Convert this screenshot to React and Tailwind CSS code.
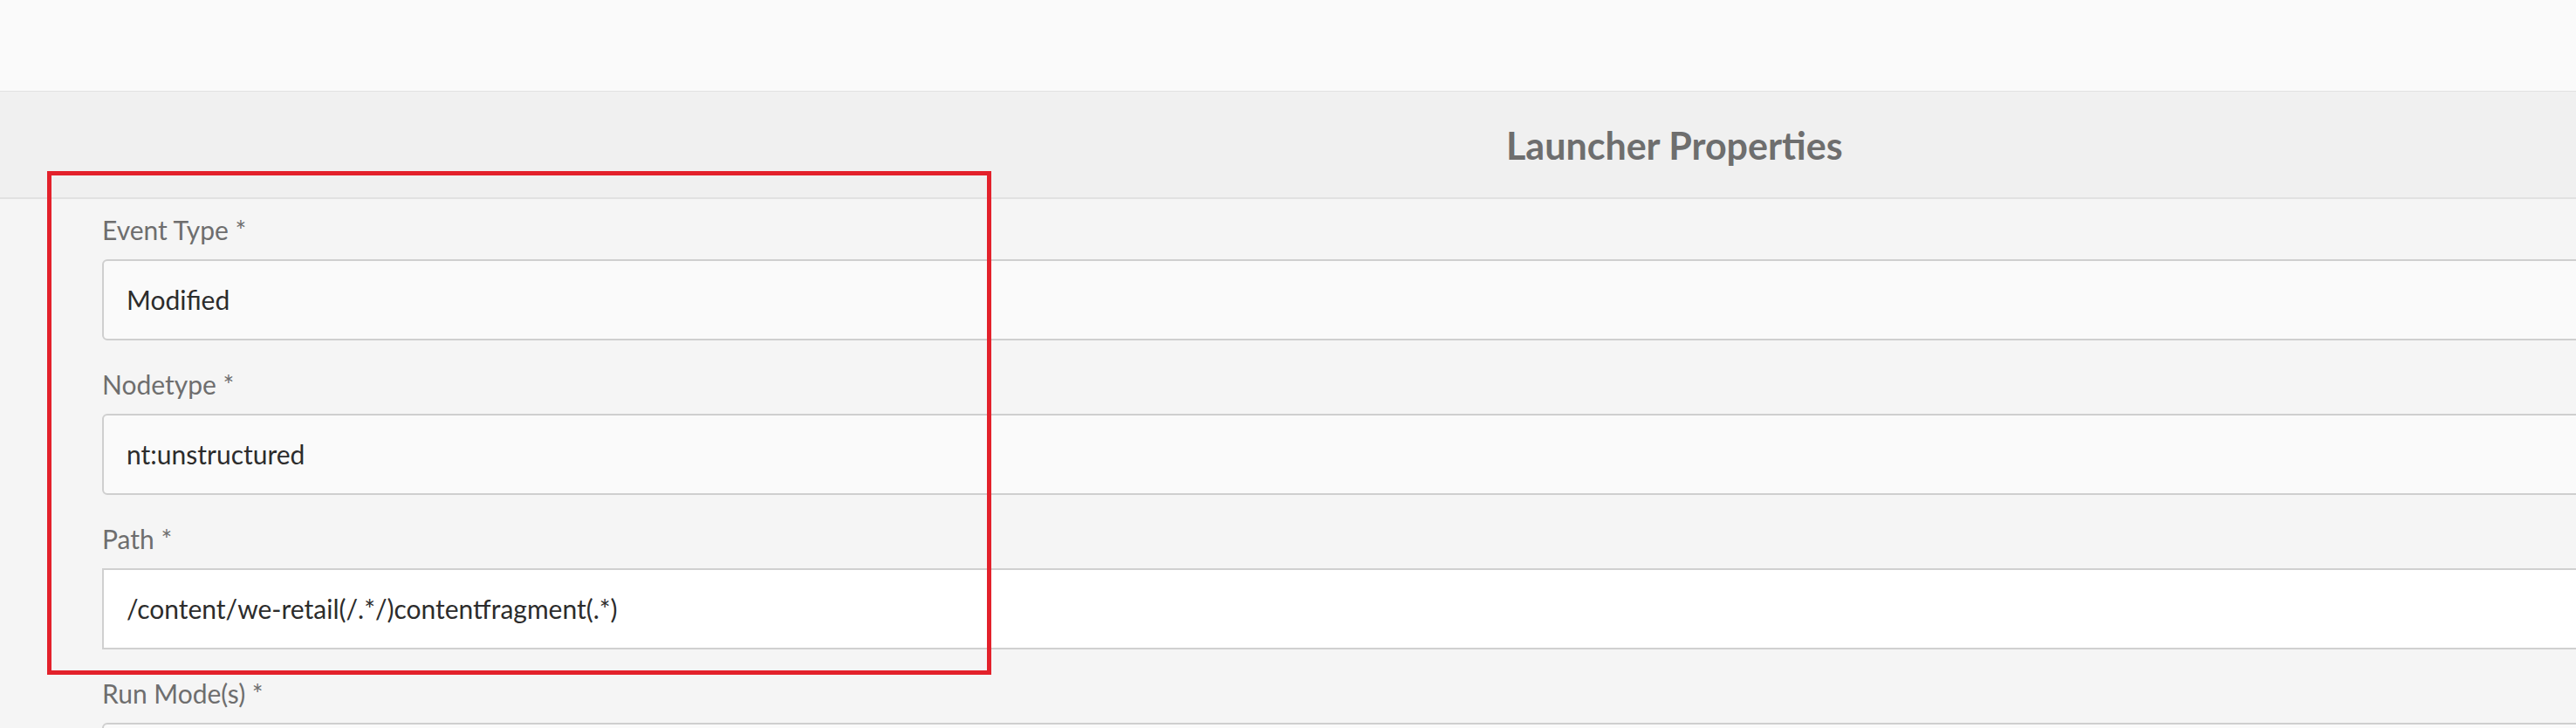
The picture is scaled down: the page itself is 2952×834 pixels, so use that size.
import React from "react";

const fields = [
  { label: "Event Type *", value: "Modified", kind: "select" },
  { label: "Nodetype *", value: "nt:unstructured", kind: "select" },
  { label: "Path *", value: "/content/we-retail(/.*/)contentfragment(.*)", kind: "text" },
  { label: "Run Mode(s) *", value: "", kind: "select" },
];

function Field({ label, value, kind }) {
  return (
    <div className="flex flex-col">
      <label className="text-[30px] leading-[36px] text-[#6e6e6e]">{label}</label>
      <div
        className={`mt-4 h-[93px] w-[2900px] flex items-center pl-[26px] border-2 text-[30px] text-[#2c2c2c] ${
          kind === "text"
            ? "bg-white border-[#d0d0d0]"
            : "bg-[#fafafa] border-[#cfcfcf] rounded-[6px]"
        }`}
      >
        {value}
      </div>
    </div>
  );
}

export default function App() {
  return (
    <div
      className="relative w-[2952px] h-[834px] overflow-hidden bg-[#f5f5f5]"
      style={{ fontFamily: "Lato, 'Open Sans', sans-serif" }}
    >
      {/* top bar */}
      <div className="h-[105px] bg-[#fafafa] border-b border-[#e1e1e1]" />

      {/* dialog header */}
      <div className="h-[123px] bg-[#f0f0f0] border-b-2 border-[#e1e1e1] flex items-center pl-[1726px] pt-1">
        <h1 className="text-[43px] font-bold text-[#6e6e6e]">Launcher Properties</h1>
      </div>

      {/* form */}
      <div className="pl-[117px] pt-[17px] flex flex-col gap-8">
        {fields.map((f) => (
          <Field key={f.label} {...f} />
        ))}
      </div>

      {/* annotation */}
      <div className="absolute left-[54px] top-[196px] w-[1082px] h-[577px] border-[5px] border-[#e3212b]" />
    </div>
  );
}
